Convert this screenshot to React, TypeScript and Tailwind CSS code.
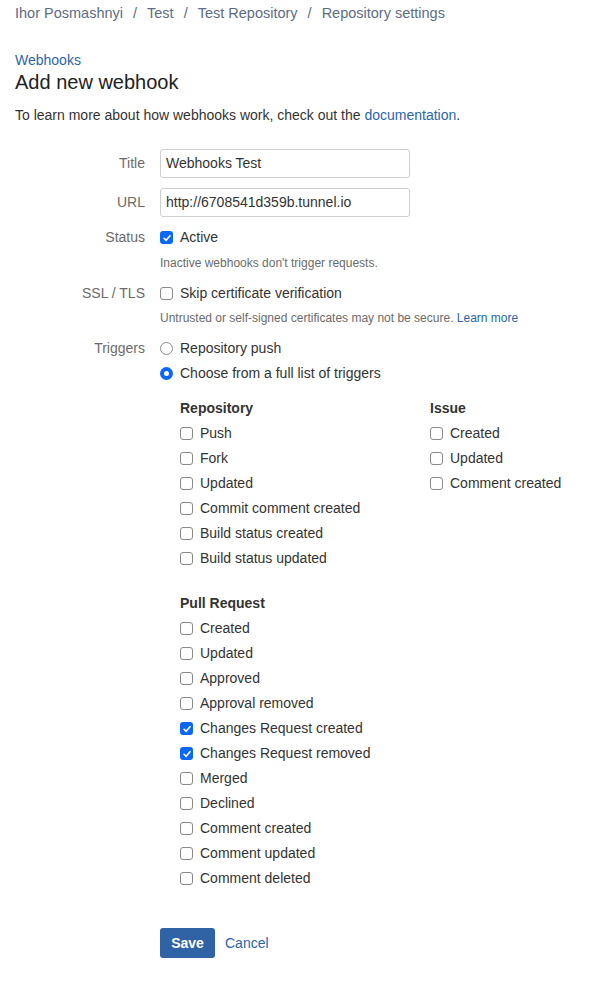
import React from "react";

const Check = ({ checked }: { checked?: boolean }) =>
  checked ? (
    <span className="flex h-[13px] w-[13px] shrink-0 items-center justify-center rounded-[3px] bg-[#0b67f5]">
      <svg viewBox="0 0 12 12" className="h-[10px] w-[10px]">
        <path d="M2.5 6.3 L5 8.8 L9.6 3.2" fill="none" stroke="#fff" strokeWidth="1.9" strokeLinecap="round" strokeLinejoin="round" />
      </svg>
    </span>
  ) : (
    <span className="h-[13px] w-[13px] shrink-0 rounded-[3px] border border-[#8a8a8a] bg-white" />
  );

const Radio = ({ checked }: { checked?: boolean }) =>
  checked ? (
    <span className="flex h-[13px] w-[13px] shrink-0 items-center justify-center rounded-full bg-[#0b67f5]">
      <span className="h-[5px] w-[5px] rounded-full bg-white" />
    </span>
  ) : (
    <span className="h-[13px] w-[13px] shrink-0 rounded-full border border-[#8a8a8a] bg-white" />
  );

const Option = ({ children, checked, radio }: { children: React.ReactNode; checked?: boolean; radio?: boolean }) => (
  <div className="flex h-[25px] items-center gap-[7px]">
    {radio ? <Radio checked={checked} /> : <Check checked={checked} />}
    <span>{children}</span>
  </div>
);

const Label = ({ children }: { children: React.ReactNode }) => (
  <div className="flex h-[25px] items-center justify-end text-[#6b6b6b]">{children}</div>
);

const repoTriggers = ["Push", "Fork", "Updated", "Commit comment created", "Build status created", "Build status updated"];
const issueTriggers = ["Created", "Updated", "Comment created"];
const prTriggers = [
  { name: "Created" },
  { name: "Updated" },
  { name: "Approved" },
  { name: "Approval removed" },
  { name: "Changes Request created", checked: true },
  { name: "Changes Request removed", checked: true },
  { name: "Merged" },
  { name: "Declined" },
  { name: "Comment created" },
  { name: "Comment updated" },
  { name: "Comment deleted" },
];

export default function App() {
  return (
    <div className="min-h-[988px] bg-white px-[15px] font-['Liberation_Sans',Arial,sans-serif] text-[14px] text-[#333]">
      {/* Breadcrumbs */}
      <div className="flex h-[28px] items-center text-[14.5px] text-[#5e6c84]">
        Ihor Posmashnyi<span className="mx-[10px]">/</span>Test<span className="mx-[10px]">/</span>Test Repository
        <span className="mx-[10px]">/</span>Repository settings
      </div>

      <div className="mt-[22px] h-[20px] leading-[20px] text-[#2a65ad]">Webhooks</div>
      <h1 className="h-[24px] text-[20px] leading-[24px] text-[#222]">Add new webhook</h1>
      <p className="mt-[11px] h-[20px] leading-[20px]">
        To learn more about how webhooks work, check out the <span className="text-[#2a65ad]">documentation</span>.
      </p>

      <div className="mt-[24px] grid grid-cols-[130px_1fr] gap-x-[15px]">
        <div className="flex h-[29px] items-center justify-end text-[#6b6b6b]">Title</div>
        <div className="flex h-[29px] w-[250px] items-center rounded-[3px] border border-[#cfcfcf] px-[5px]">Webhooks Test</div>

        <div className="mt-[10px] flex h-[29px] items-center justify-end text-[#6b6b6b]">URL</div>
        <div className="mt-[10px] flex h-[29px] w-[250px] items-center rounded-[3px] border border-[#cfcfcf] px-[5px]">
          http://6708541d359b.tunnel.io
        </div>

        <div className="mt-[8px]">
          <Label>Status</Label>
        </div>
        <div className="mt-[8px]">
          <Option checked>Active</Option>
          <div className="mt-[5px] h-[16px] text-[12px] leading-[16px] text-[#6b6b6b]">Inactive webhooks don't trigger requests.</div>
        </div>

        <div className="mt-[10px]">
          <Label>SSL / TLS</Label>
        </div>
        <div className="mt-[10px]">
          <Option>Skip certificate verification</Option>
          <div className="mt-[4px] h-[16px] text-[12px] leading-[16px] text-[#6b6b6b]">
            Untrusted or self-signed certificates may not be secure. <span className="text-[#2a65ad]">Learn more</span>
          </div>
        </div>

        <div className="mt-[10px]">
          <Label>Triggers</Label>
        </div>
        <div className="mt-[10px]">
          <Option radio>Repository push</Option>
          <Option radio checked>
            Choose from a full list of triggers
          </Option>

          <div className="mt-[10px] grid grid-cols-[250px_1fr] pl-[20px]">
            <div>
              <div className="flex h-[25px] items-center font-bold">Repository</div>
              {repoTriggers.map((t) => (
                <Option key={t}>{t}</Option>
              ))}
            </div>
            <div>
              <div className="flex h-[25px] items-center font-bold">Issue</div>
              {issueTriggers.map((t) => (
                <Option key={t}>{t}</Option>
              ))}
            </div>
          </div>

          <div className="mt-[20px] pl-[20px]">
            <div className="flex h-[25px] items-center font-bold">Pull Request</div>
            {prTriggers.map((t) => (
              <Option key={t.name} checked={t.checked}>
                {t.name}
              </Option>
            ))}
          </div>

          <div className="mt-[37px] flex items-center gap-[10px]">
            <button className="h-[30px] w-[55px] rounded-[3px] bg-[#2f63a6] font-bold text-white">Save</button>
            <span className="text-[#2a65ad]">Cancel</span>
          </div>
        </div>
      </div>
    </div>
  );
}
